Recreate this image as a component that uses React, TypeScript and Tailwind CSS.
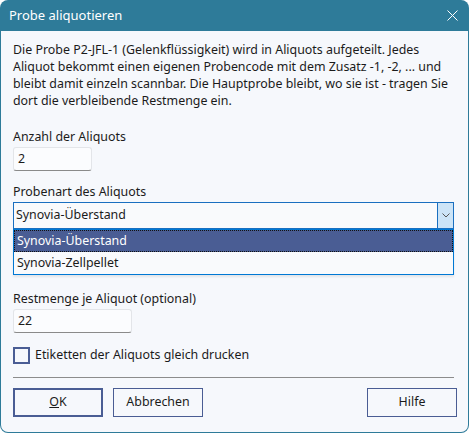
import React from 'react';

const font = { fontFamily: '"Noto Sans", "Open Sans", sans-serif' };

const TextBox: React.FC<{ value: string; width: string }> = ({ value, width }) => (
  <div
    className={`${width} h-[24px] bg-[#fbfcfe] border border-[#e3e5e9] border-b-[#8a8a8a] rounded-[3px] flex items-center px-[4px] text-[12.4px] text-[#1b1b1b]`}
  >
    {value}
  </div>
);

const Button: React.FC<{ children: React.ReactNode; primary?: boolean }> = ({ children, primary }) => (
  <button
    className={`w-[90px] h-[29px] bg-[#f6f8fc] text-[12.4px] text-[#1b1b1b] flex items-center justify-center ${
      primary ? 'border-2 border-[#4a5d94]' : 'border border-[#4a5d94]'
    }`}
  >
    {children}
  </button>
);

export default function App() {
  return (
    <div className="w-[469px] h-[433px] bg-white" style={font}>
      <div className="w-full h-full flex flex-col bg-[#2e7b99] rounded-t-[8px] rounded-b-[8px] overflow-hidden">
        {/* title bar */}
        <div className="h-[31px] flex items-center justify-between pl-[9px] pr-[10px] shrink-0">
          <span className="text-[13px] text-white">Probe aliquotieren</span>
          <svg width="11" height="11" viewBox="0 0 11 11" className="mr-[1px]">
            <path d="M0.5 0.5 L10.5 10.5 M10.5 0.5 L0.5 10.5" stroke="#ffffff" strokeWidth="1" />
          </svg>
        </div>

        {/* body */}
        <div className="flex-1 mx-[1px] mb-[1px] bg-[#f6f8fc] rounded-b-[7px] px-[12px] text-[12.4px] text-[#1b1b1b] flex flex-col">
          <p className="mt-[10px] leading-[17px] whitespace-nowrap">
            Die Probe P2-JFL-1 (Gelenkflüssigkeit) wird in Aliquots aufgeteilt. Jedes
            <br />
            Aliquot bekommt einen eigenen Probencode mit dem Zusatz -1, -2, ... und
            <br />
            bleibt damit einzeln scannbar. Die Hauptprobe bleibt, wo sie ist - tragen Sie
            <br />
            dort die verbleibende Restmenge ein.
          </p>

          <div className="mt-[19px] leading-[17px]">Anzahl der Aliquots</div>
          <div className="mt-[2px]">
            <TextBox value="2" width="w-[79px]" />
          </div>

          <div className="mt-[12px] leading-[17px]">Probenart des Aliquots</div>
          <div className="relative mt-[2px] w-[441px]">
            <div className="h-[27px] border border-[#1a6fc0] bg-[#f9fafc] flex items-stretch">
              <div className="flex-1 flex items-center px-[2px]">Synovia-Überstand</div>
              <div className="w-[16px] bg-[#cce4f7] border-l border-[#1a6fc0] flex items-center justify-center">
                <svg width="8" height="5" viewBox="0 0 8 5">
                  <path d="M0.5 0.5 L4 4 L7.5 0.5" stroke="#555" strokeWidth="1" fill="none" />
                </svg>
              </div>
            </div>
            {/* open dropdown list */}
            <div className="absolute left-0 top-[27px] w-[441px] z-10 bg-[#f9fafc] border border-[#0078d4] shadow-[0_2px_2px_rgba(0,0,0,0.08)]">
              <div className="h-[22px] bg-[#4a5d94] text-white flex items-center px-[3px] outline-1 outline-dotted outline-[#111] -outline-offset-1">
                Synovia-Überstand
              </div>
              <div className="h-[22px] flex items-center px-[3px]">Synovia-Zellpellet</div>
            </div>
          </div>

          <div className="mt-[61px] leading-[17px]">Restmenge je Aliquot (optional)</div>
          <div className="mt-[2px]">
            <TextBox value="22" width="w-[119px]" />
          </div>

          <div className="mt-[14px] flex items-center h-[17px]">
            <div className="w-[17px] h-[17px] border-2 border-[#4a5d94] bg-[#f6f8fc]" />
            <span className="ml-[5px]">Etiketten der Aliquots gleich drucken</span>
          </div>

          <div className="mt-[13px] h-px bg-[#8c8c8c] w-[441px]" />

          <div className="mt-[10px] flex">
            <Button primary>
              <span className="underline">O</span>K
            </Button>
            <div className="ml-[10px]">
              <Button>Abbrechen</Button>
            </div>
            <div className="ml-auto -mr-[1px]">
              <Button>Hilfe</Button>
            </div>
          </div>
        </div>
      </div>
    </div>
  );
}
